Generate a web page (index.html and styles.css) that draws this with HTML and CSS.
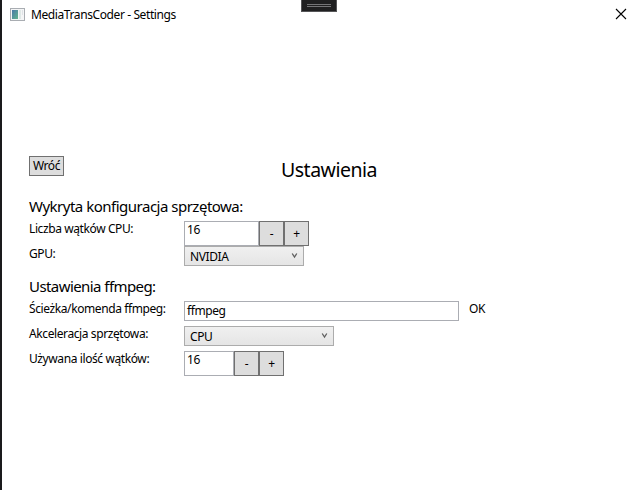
FILE: index.html
```html
<!DOCTYPE html>
<html lang="pl">
<head>
<meta charset="utf-8">
<title>MediaTransCoder - Settings</title>
<link rel="stylesheet" href="styles.css">
</head>
<body>
<div class="window">
  <header class="titlebar">
    <svg class="app-icon" width="15" height="13" viewBox="0 0 15 13" shape-rendering="crispEdges">
      <defs><linearGradient id="g" x1="0" y1="0" x2="1" y2="1"><stop offset="0" stop-color="#4a78a8"/><stop offset="1" stop-color="#62b58e"/></linearGradient></defs>
      <rect x=".5" y=".5" width="14" height="12" fill="#f4f5f6" stroke="#a9adb2"/>
      <rect x="2" y="2" width="6" height="9" fill="url(#g)"/>
      <rect x="9" y="2" width="2" height="9" fill="#dfe8e6"/>
      <rect x="12" y="2" width="1" height="5" fill="#dfe3e6"/>
    </svg>
    <span class="caption">MediaTransCoder - Settings</span>
    <svg class="close" width="10" height="10" viewBox="0 0 10 10"><path d="M0 0L10 10M10 0L0 10" stroke="#000" stroke-width="1.1"/></svg>
  </header>
  <div class="grip"><i></i><i></i></div>
  <main>
    <div class="top"><button class="btn back">Wróć</button><h1>Ustawienia</h1></div>
    <h2 class="h-hardware">Wykryta konfiguracja sprzętowa:</h2>
    <div class="row tall"><label>Liczba wątków CPU:</label><div class="field wide">16</div><button class="btn step">-</button><button class="btn step">+</button></div>
    <div class="row gpu"><label>GPU:</label><div class="combo short"><span>NVIDIA</span><svg width="7" height="6" viewBox="0 0 7 6"><path d="M1.2 .5L3.5 4L5.8 .5" fill="none" stroke="#606060" stroke-width="1.3"/></svg></div></div>
    <h2 class="h-ffmpeg">Ustawienia ffmpeg:</h2>
    <div class="row"><label>Ścieżka/komenda ffmpeg:</label><div class="field path">ffmpeg</div><span class="status">OK</span></div>
    <div class="row"><label>Akceleracja sprzętowa:</label><div class="combo long"><span>CPU</span><svg width="7" height="6" viewBox="0 0 7 6"><path d="M1.2 .5L3.5 4L5.8 .5" fill="none" stroke="#606060" stroke-width="1.3"/></svg></div></div>
    <div class="row tall"><label>Używana ilość wątków:</label><div class="field narrow">16</div><button class="btn step">-</button><button class="btn step">+</button></div>
  </main>
</div>
</body>
</html>
```
FILE: styles.css
```css
* { box-sizing: border-box; }
body { margin: 0; background: #fff; overflow: hidden; }
.window {
  height: 490px;
  border-left: 2px solid #1a1a1c;
  background: #fff;
  color: #000;
  font: 12px/16px "Noto Sans", "Open Sans", sans-serif;
  letter-spacing: -0.4px;
}
.titlebar { display: flex; align-items: center; height: 29px; padding: 0 9px 0 8px; }
.app-icon { margin-right: 6px; }
.caption { flex: 1; white-space: nowrap; padding-top: 1px; }
.close { display: block; overflow: visible; margin-top: -1px; }
.grip {
  position: absolute; left: 301px; top: 0; width: 36px; height: 12px;
  display: flex; flex-direction: column; gap: 1px; padding: 4px 5px 0;
  background: #1f1f20; border: 1px solid #555557; border-top: 0;
}
.grip i { height: 1px; background: #747476; }
main { padding: 127px 0 0 27px; }
.top { display: flex; height: 40px; align-items: flex-start; }
h1, h2 { margin: 0; font-weight: 400; white-space: nowrap; }
h1 { font-size: 19.5px; line-height: 28px; margin-left: 217px; letter-spacing: -0.5px; }
h2 { font-size: 15px; line-height: 20px; letter-spacing: -0.5px; }
.h-hardware { height: 25px; }
.h-ffmpeg { height: 25px; letter-spacing: -0.57px; }
.btn {
  display: flex; align-items: center; justify-content: center;
  margin: 0; padding: 0; font: inherit; letter-spacing: inherit; color: #000;
  background: #ddd; border: 1px solid #707070; border-radius: 0;
}
.back { width: 35px; height: 20px; }
.step { width: 25px; height: 25px; }
.row { display: flex; align-items: flex-start; height: 25px; white-space: nowrap; }
.row.gpu { height: 30px; }
label { width: 155px; }
.field { height: 20px; padding: 1px 2px; border: 1px solid #abadb3; background: #fff; }
.tall .field { height: 25px; padding-top: 0; }
.wide { width: 75px; }
.narrow { width: 50px; }
.path { width: 275px; }
.combo {
  display: flex; justify-content: space-between; height: 20px; padding: 2px 5px 0;
  border: 1px solid #acacac; background: linear-gradient(#f0f0f0, #e5e5e5);
}
.combo svg { margin-top: 4px; }
.short { width: 120px; }
.long { width: 150px; }
.status { margin-left: 10px; }
```
